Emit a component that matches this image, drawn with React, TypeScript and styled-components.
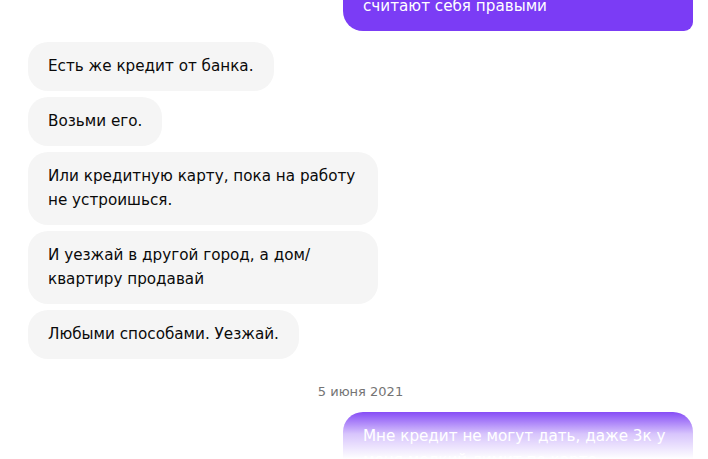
import React from "react";
import styled, { createGlobalStyle } from "styled-components";

const Global = createGlobalStyle`
  html, body { margin: 0; padding: 0; background: #fff; overflow: hidden; }
  body { font-family: "DejaVu Sans", "Liberation Sans", sans-serif; }
`;

const Viewport = styled.div`
  position: relative;
  width: 708px;
  height: 459px;
  overflow: hidden;
  background: #fff;
`;

const Feed = styled.div`
  display: flex;
  flex-direction: column;
  padding: 0 15px 0 28px;
  margin-top: -42px;
`;

const Group = styled.div<{ $mine?: boolean; $mb?: number }>`
  display: flex;
  flex-direction: column;
  align-items: ${(p) => (p.$mine ? "flex-end" : "flex-start")};
  gap: 6px;
  margin-bottom: ${(p) => p.$mb ?? 0}px;
`;

const Bubble = styled.div<{ $mine?: boolean; $tail?: boolean }>`
  box-sizing: border-box;
  max-width: 350px;
  padding: 12px 20px 13px;
  font-size: 15.2px;
  line-height: 24px;
  border-radius: ${(p) => (p.$tail ? "20px 20px 9px 20px" : "20px")};
  background: ${(p) => (p.$mine ? "#7b3cf5" : "#f5f5f5")};
  color: ${(p) => (p.$mine ? "#fff" : "#0a0a0a")};
  width: ${(p) => (p.$mine ? "350px" : "auto")};
`;

const DateLabel = styled.div`
  align-self: center;
  font-size: 13px;
  line-height: 16px;
  color: #747474;
  margin: 25px 0 12px;
`;

const Fade = styled.div`
  position: absolute;
  left: 0;
  right: 0;
  bottom: 0;
  height: 50px;
  background: linear-gradient(
    to bottom,
    rgba(255, 255, 255, 0) 0%,
    rgba(255, 255, 255, 0.7) 50%,
    rgba(255, 255, 255, 1) 100%
  );
  pointer-events: none;
`;

const left = [
  "Есть же кредит от банка.",
  "Возьми его.",
  "Или кредитную карту, пока на работу не устроишься.",
  "И уезжай в другой город, а дом/ квартиру продавай",
  "Любыми способами. Уезжай.",
];

export default function App() {
  return (
    <Viewport>
      <Global />
      <Feed>
        <Group $mine $mb={11}>
          <Bubble $mine $tail>
            Набрали кредитов и всё равно
            <br />
            считают себя правыми
          </Bubble>
        </Group>
        <Group>
          {left.map((t) => (
            <Bubble key={t}>{t}</Bubble>
          ))}
        </Group>
        <DateLabel>5 июня 2021</DateLabel>
        <Group $mine>
          <Bubble $mine>Мне кредит не могут дать, даже 3к у меня мелкий лимит по карте</Bubble>
        </Group>
      </Feed>
      <Fade />
    </Viewport>
  );
}
